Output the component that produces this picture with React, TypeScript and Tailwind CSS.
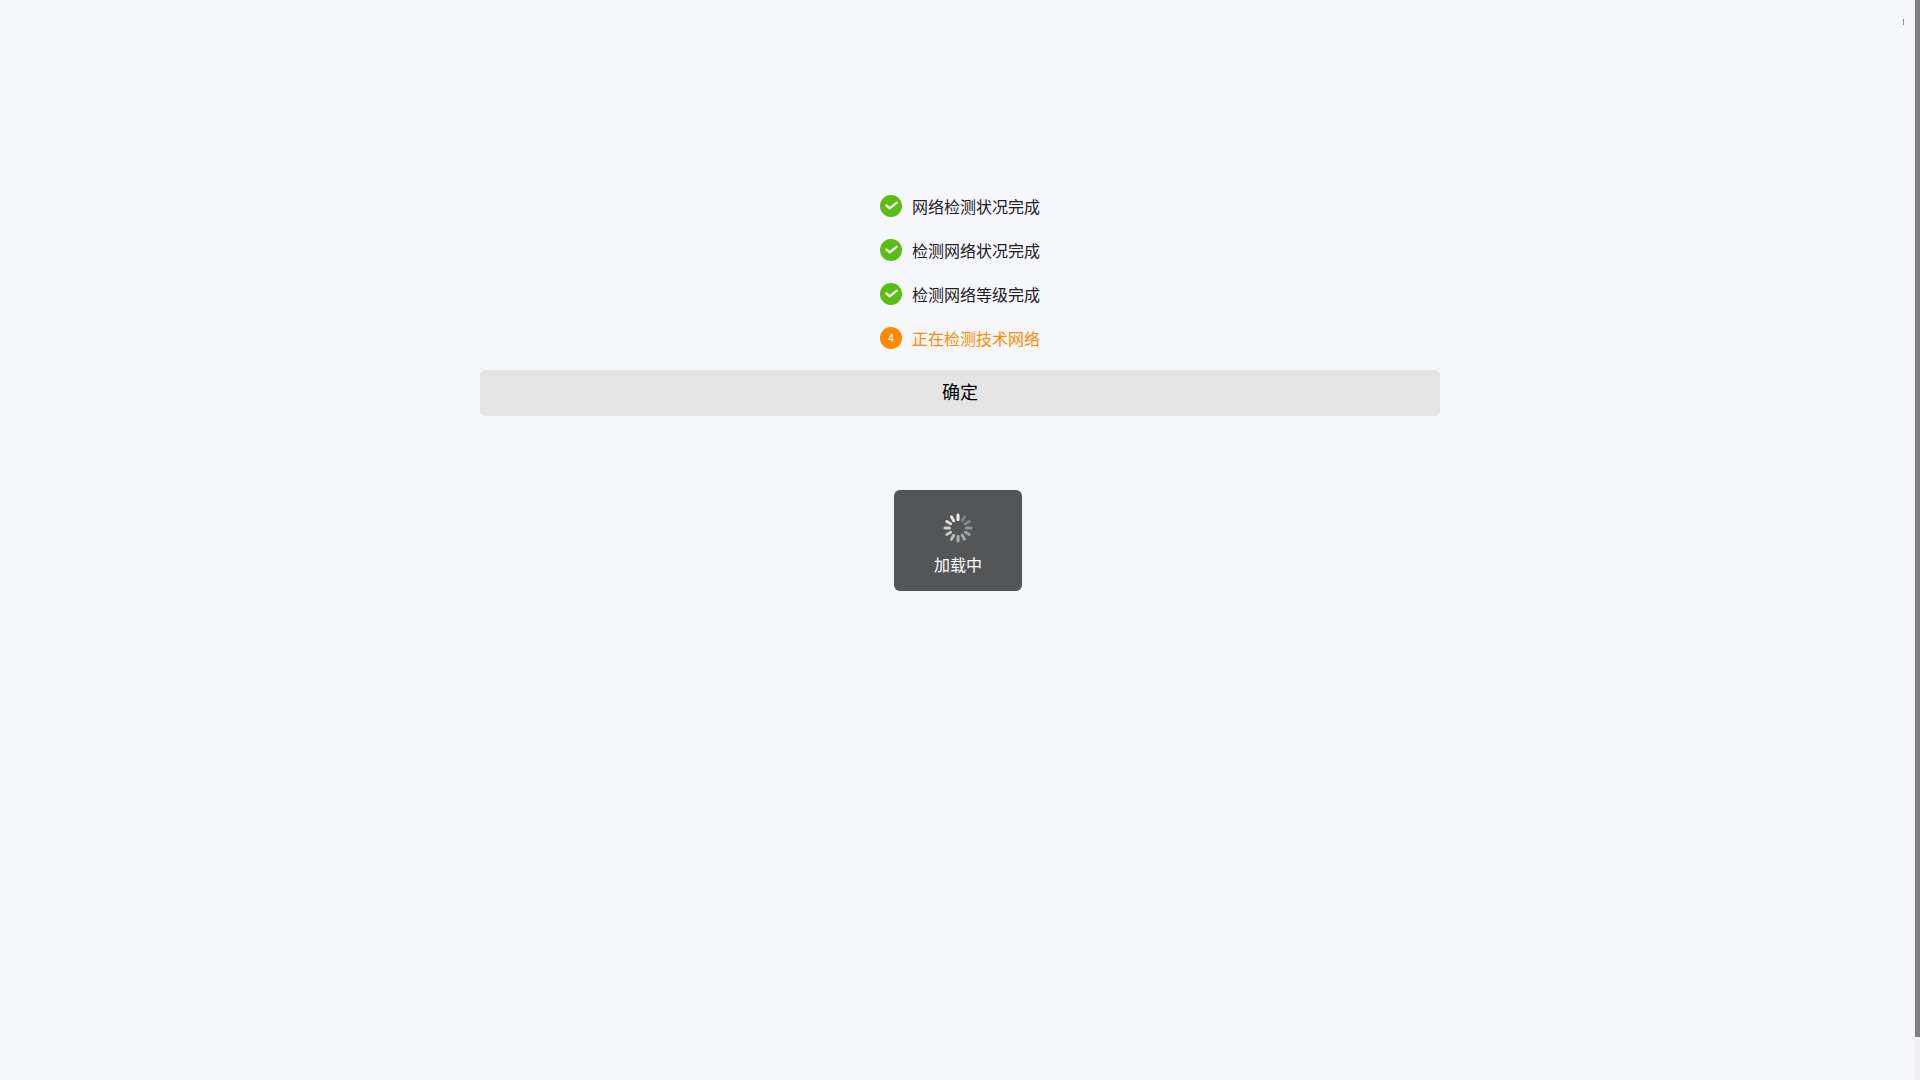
const rows = ["网络检测状况完成", "检测网络状况完成", "检测网络等级完成"];

function Spinner() {
  return (
    <svg width="30" height="30" viewBox="0 0 30 30">
      {Array.from({ length: 12 }).map((_, i) => (
        <rect
          key={i}
          x="13.5"
          y="0.5"
          width="3"
          height="7.5"
          rx="1.5"
          fill="#fff"
          opacity={0.25 + ((i + 11) % 12) * 0.06}
          transform={`rotate(${i * 30} 15 15)`}
        />
      ))}
    </svg>
  );
}

export default function App() {
  return (
    <div className="relative h-screen overflow-hidden bg-[#f5f7fb] font-['Noto_Sans_CJK_SC','Liberation_Sans',sans-serif]">
      <div className="w-screen pt-[184px] flex flex-col items-center">
        <div className="flex flex-col">
          {rows.map((text) => (
            <div key={text} className="h-11 flex items-center gap-[10px]">
              <span className="w-[22px] h-[22px] rounded-full bg-[#5cbc14]">
                <svg width="22" height="22" viewBox="0 0 22 22" fill="none" stroke="#fff" strokeWidth="2.2" strokeLinecap="round" strokeLinejoin="round">
                  <path d="M6.3 10.4 9.8 13.4 16.8 7.6" />
                </svg>
              </span>
              <span className="text-base leading-6 text-[#1f2021]">{text}</span>
            </div>
          ))}
          <div className="h-11 flex items-center gap-[10px]">
            <span className="w-[22px] h-[22px] rounded-full bg-[#ff8a00] flex items-center justify-center text-white text-[11px] font-['Liberation_Sans',sans-serif]">4</span>
            <span className="text-base leading-6 text-[#ff8a00]">正在检测技术网络</span>
          </div>
        </div>

        <button className="mt-[10px] w-[960px] h-[46px] pb-[4px] rounded-md bg-[#e4e4e4] text-black text-lg">确定</button>
      </div>

      <div className="absolute left-[894px] top-[490px] w-[128px] h-[100.5px] rounded-md bg-[#545557] flex flex-col items-center pt-[23px] text-white text-base">
        <Spinner />
        <span className="mt-[9px] leading-6">加载中</span>
      </div>

      <span className="absolute left-[1903px] top-[19px] w-[1px] h-[6px] bg-[#8a8f96]" />

      {/* scrollbar */}
      <div className="absolute right-0 top-0 w-[5px] h-full bg-[#f1f1f1]">
        <div className="h-[1037px] bg-[#808080]" />
      </div>
    </div>
  );
}
